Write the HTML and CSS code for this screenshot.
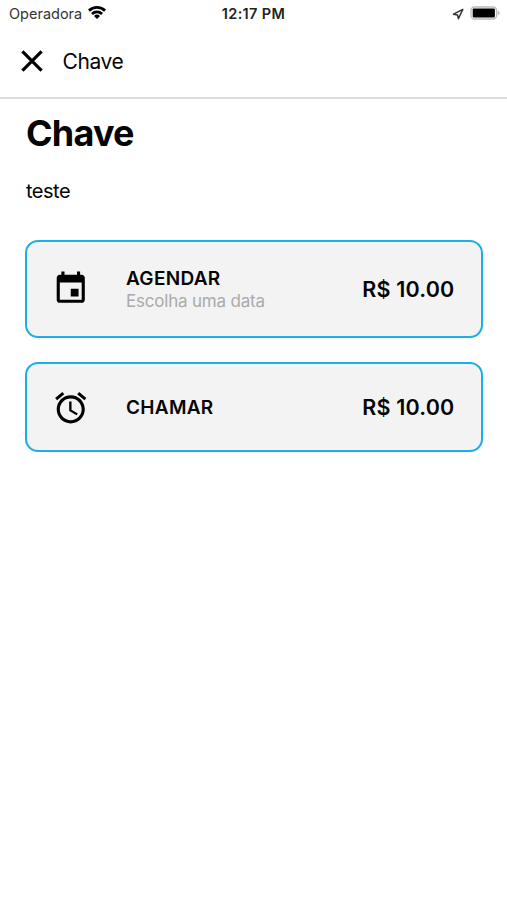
FILE: index.html
```html
<!DOCTYPE html>
<html lang="pt-BR">
<head>
<meta charset="utf-8">
<title>Chave</title>
<link rel="stylesheet" href="styles.css">
</head>
<body>
<div class="status">
  <div class="status-left"><span class="carrier">Operadora</span>
    <svg class="wifi" viewBox="0 0 18 14"><path d="M0 4.6a12.8 12.8 0 0 1 18 0L16.1 6.7a10.1 10.1 0 0 0-14.2 0ZM3 7.9a8.5 8.5 0 0 1 12 0L13.1 9.9a5.9 5.9 0 0 0-8.2 0ZM6 11a4.3 4.3 0 0 1 6 0L9 14Z"/></svg>
  </div>
  <span class="time">12:17 PM</span>
  <div class="status-right">
    <svg class="location" viewBox="0 0 12 12"><path d="M10.8 1.4 1.5 6.2l4 .7.9 3.8Z"/></svg>
    <svg class="battery" viewBox="0 0 30 14"><rect class="shell" x="1" y="1" width="25.6" height="12" rx="3.5"/><rect x="2.7" y="2.5" width="22.2" height="9" rx="1"/><path class="cap" d="M27.8 4.7q2 .8 2 2.3t-2 2.3Z"/></svg>
  </div>
</div>
<header class="nav">
  <svg class="close" viewBox="0 0 22 22"><path d="M1.4 1.4 20.6 20.6M20.6 1.4 1.4 20.6"/></svg>
  <span class="nav-title">Chave</span>
</header>
<main>
  <h1>Chave</h1>
  <p class="description">teste</p>
  <section class="card schedule">
    <svg class="icon" viewBox="0 0 24 24"><path d="M17 12h-5v5h5v-5zM16 1v2H8V1H6v2H5c-1.11 0-1.99.9-1.99 2L3 19c0 1.1.89 2 2 2h14c1.1 0 2-.9 2-2V5c0-1.1-.9-2-2-2h-1V1h-2zm3 18H5V8h14v11z"/></svg>
    <div class="label"><strong>AGENDAR</strong><span class="hint">Escolha uma data</span></div>
    <span class="price">R$ 10.00</span>
  </section>
  <section class="card call">
    <svg class="icon" viewBox="0 0 24 24"><path d="M22 5.72l-4.6-3.86-1.29 1.53 4.6 3.86L22 5.72zM7.88 3.39L6.6 1.86 2 5.71l1.29 1.53 4.59-3.85zM12.5 8H11v6l4.75 2.85.75-1.23-4-2.37V8zM12 4c-4.97 0-9 4.03-9 9s4.02 9 9 9c4.97 0 9-4.03 9-9s-4.03-9-9-9zm0 16c-3.87 0-7-3.13-7-7s3.13-7 7-7 7 3.13 7 7-3.13 7-7 7z"/></svg>
    <div class="label"><strong>CHAMAR</strong></div>
    <span class="price">R$ 10.00</span>
  </section>
</main>
</body>
</html>
```
FILE: styles.css
```css
* { box-sizing: border-box; }
body { margin: 0; background: #fff; color: #050505; font-family: Inter, "Liberation Sans", sans-serif; }
svg { display: block; flex: none; }
.status { display: grid; grid-template-columns: 1fr auto 1fr; align-items: center; height: 27px; padding: 0 7px 0 9px; }
.status-left, .status-right { display: flex; align-items: center; }
.status-left { gap: 6px; }
.status-right { justify-content: flex-end; gap: 6px; }
.carrier { font-size: 14.5px; color: #333; }
.time { margin-right: 2px; font-size: 14.5px; font-weight: 600; letter-spacing: .35px; color: #222; }
.wifi { width: 18px; height: 14px; margin-top: -3px; }
.location { width: 12px; height: 12px; fill: none; stroke: #333; stroke-width: 1.5; stroke-linejoin: round; }
.battery { width: 30px; height: 14px; margin-top: -1px; }
.shell { fill: #fff; stroke: #bbb; stroke-width: 1.3; }
.cap { fill: #bbb; }
.nav { display: flex; align-items: center; gap: 20px; height: 72px; padding: 0 20.5px 2px; border-bottom: 2px solid #dcdcdc; }
.close { width: 22px; height: 22px; fill: none; stroke: #000; stroke-width: 3.2; }
.nav-title { font-size: 21px; letter-spacing: -.4px; padding-top: 1px; }
main { padding: 12px 24px 0 25px; }
h1 { margin: 0; font-size: 36px; line-height: 44px; font-weight: 700; letter-spacing: -.8px; padding-left: 1px; }
.description { margin: 24px 0 36px; padding-left: 1px; font-size: 20px; line-height: 25px; letter-spacing: -.5px; }
.card { display: flex; align-items: center; padding: 0 26.5px 0 25px; border: 2px solid #1daee5; border-radius: 13px; background: #f3f3f3; }
.schedule { height: 98px; }
.call { height: 90px; margin-top: 24px; }
.icon { width: 37.5px; height: 37.5px; }
.schedule .icon { margin-top: -1px; }
.call .icon { margin-top: 1px; }
.label { display: flex; flex-direction: column; margin-left: 36.5px; padding-top: 2px; }
.label strong { font-size: 19px; line-height: 22px; font-weight: 600; letter-spacing: .3px; }
.hint { font-size: 17px; line-height: 22px; letter-spacing: -.2px; color: #aaa; }
.price { margin-left: auto; font-size: 21.5px; font-weight: 600; letter-spacing: .2px; }
```
